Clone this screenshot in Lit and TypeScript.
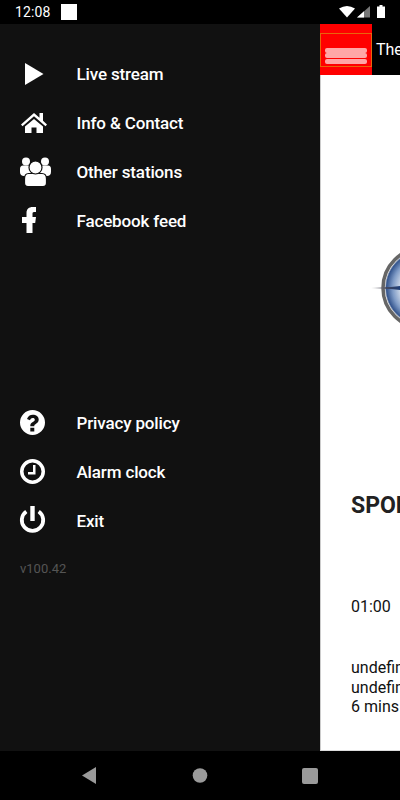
import { LitElement, html, css, svg } from "lit";
import { customElement } from "lit/decorators.js";

const topItems = [
  { label: "Live stream", icon: svg`<svg class="ic" width="40" height="30" viewBox="0 0 40 30"><path d="M12 4 L30.500 15 L12 26 Z"/></svg>` },
  { label: "Info & Contact", icon: svg`<svg class="ic" width="40" height="30" viewBox="0 0 40 30"><path d="M8 16.500 L21 5 L26.500 9.700 V5 H30 V12.800 L34 16.500 L32.500 18.200 L21 8.200 L9.500 18.200 Z"/><path d="M12 18.500 L21 11 L30 18.500 V25 H23.500 V19.500 H18.500 V25 H12 Z"/></svg>` },
  { label: "Other stations", icon: svg`<svg class="ic" width="40" height="30" viewBox="0 0 40 30"><circle cx="13" cy="4.500" r="4"/><circle cx="32" cy="4.500" r="4"/><path d="M10 8.500 H35 C37 8.500 38 10 38 12 V15 C38 17.500 36.500 19 34 19 H11 C8.500 19 7 17.500 7 15 V12 C7 10 8 8.500 10 8.500 Z"/><path d="M15.500 16.500 H29 C32 16.500 33.500 19 33.500 22 V26 C33.500 28 32 29.500 30 29.500 H15 C13 29.500 11.500 28 11.500 26 V22 C11.500 19 13 16.500 15.500 16.500 Z" stroke="#111" stroke-width="1.200"/><circle cx="22.500" cy="10.500" r="6.500" stroke="#111" stroke-width="1.200"/></svg>` },
  { label: "Facebook feed", icon: svg`<svg class="ic" width="40" height="30" viewBox="0 0 40 30"><path d="M13.500 27 V17 H9 V11 H13.500 V7 C13.500 3 16 1 19.500 1 H23 V6 H21 C19.800 6 19.500 6.800 19.500 8 V11 H23 L22.200 17 H19.500 V27 Z"/></svg>` },
];

const bottomItems = [
  { label: "Privacy policy", icon: svg`<svg class="ic" width="40" height="30" viewBox="0 0 40 30"><path fill-rule="evenodd" d="M19.500 2 A12.500 12.500 0 1 1 19.500 27 A12.500 12.500 0 1 1 19.500 2 Z M14 11 L17 12.300 C17.500 10.800 18.500 10.100 19.700 10.100 C21 10.100 21.800 10.800 21.800 11.700 C21.800 12.700 21 13.200 19.800 13.900 C18.200 14.800 17.300 15.800 17.300 17.500 V18.300 H21.300 V17.800 C21.300 17 21.800 16.600 22.800 16 C24.500 15 25.700 13.800 25.700 11.600 C25.700 8.600 23.100 6.800 19.800 6.800 C17 6.800 15 8.300 14 11 Z M17.300 19.800 V23.500 H21.300 V19.800 Z"/></svg>` },
  { label: "Alarm clock", icon: svg`<svg class="ic" width="40" height="30" viewBox="0 0 40 30"><path fill-rule="evenodd" d="M19.500 2 A12.500 12.500 0 1 1 19.500 27 A12.500 12.500 0 1 1 19.500 2 Z M19.500 5.500 A9 9 0 1 0 19.500 23.500 A9 9 0 1 0 19.500 5.500 Z"/><path d="M20 8 H22.500 V17.500 H15 V15 H20 Z"/></svg>` },
  { label: "Exit", icon: svg`<svg class="ic" width="40" height="30" viewBox="0 0 40 30"><path d="M17.300 0 H21.700 V15 H17.300 Z"/><path fill="none" stroke="#fff" stroke-width="3.800" d="M13.300 5.500 A10.700 10.700 0 1 0 25.700 5.500"/></svg>` },
];

@customElement("app-root")
export class AppRoot extends LitElement {
  static styles = css`
    :host { display: block; width: 400px; height: 800px; overflow: hidden; background: #000; font-family: Roboto, "Noto Sans", sans-serif; }
    .status { height: 24px; background: #000; display: flex; align-items: center; padding: 0 14px 0 15px; color: #fff; }
    .time { font-size: 14px; line-height: 24px; letter-spacing: 0.1px; }
    .square { width: 16px; height: 16px; background: #fff; margin-left: 11px; }
    .sys { margin-left: auto; display: flex; align-items: center; }
    .main { display: flex; height: 727px; }
    .drawer { width: 320px; background: #111; flex: none; display: flex; flex-direction: column; padding-top: 25px; }
    .list { display: flex; flex-direction: column; }
    .list.bottom { margin-top: 153px; }
    .item { height: 49px; display: flex; align-items: center; color: #fff; }
    .ic { flex: none; margin-left: 13px; fill: #fff; }
    .label { margin-left: 23.500px; font-weight: 500; font-size: 17px; letter-spacing: -0.150px; }
    .version { margin: 16px 0 0 20px; font-size: 13px; color: #555; }
    .content { flex: 1; min-width: 0; overflow: hidden; display: flex; flex-direction: column; background: #fff; }
    .bar { height: 51px; background: #000; display: flex; align-items: center; flex: none; }
    .menu-wrap { width: 52px; height: 51px; background: #f00; display: flex; align-items: center; flex: none; }
    .menu { width: 52px; height: 34px; box-sizing: border-box; border: 1px solid #e8650c; display: flex; align-items: center; justify-content: center; }
    .burger { width: 42px; height: 16px; margin-top: 12px; display: flex; flex-direction: column; gap: 0.500px; }
    .burger i { display: block; height: 5px; background: #ffa6a6; border-radius: 2px; }
    .title { color: #fff; font-size: 16px; margin-left: 4px; white-space: nowrap; }
    .body { flex: 1; min-height: 0; border-left: 1px solid #ccc; border-bottom: 1px solid #ddd; padding-left: 30px; color: #111; display: flex; flex-direction: column; align-items: flex-start; }
    .logo { flex: none; margin: 168px 0 0 20px; }
    .h { flex: none; margin-top: 160px; font-size: 23px; line-height: 26px; font-weight: 700; white-space: nowrap; color: #222; }
    .clock { flex: none; margin-top: 78px; font-size: 16px; line-height: 19px; white-space: nowrap; }
    .desc { flex: none; margin-top: 42px; font-size: 16px; line-height: 19.500px; white-space: nowrap; }
    .nav { height: 49px; background: #000; display: flex; }
  `;

  render() {
    return html`
      <div class="status">
        <span class="time">12:08</span>
        <span class="square"></span>
        <span class="sys">
          <svg width="52" height="16" viewBox="0 0 52 16">
            <path d="M5 4.500 Q13 -0.500 21 4.500 L13 13.500 Z" fill="#fff"/>
            <path d="M23 13.500 L36 2 V13.500 Z" fill="#777"/>
            <path d="M23 13.500 L30 7.300 V13.500 Z" fill="#fff"/>
            <path d="M43 2.500 H45.500 V1 H48.500 V2.500 H51 V14 H43 Z" fill="#fff"/>
          </svg>
        </span>
      </div>
      <div class="main">
        <div class="drawer">
          <div class="list">
            ${topItems.map((i) => html`<div class="item">${i.icon}<span class="label">${i.label}</span></div>`)}
          </div>
          <div class="list bottom">
            ${bottomItems.map((i) => html`<div class="item">${i.icon}<span class="label">${i.label}</span></div>`)}
          </div>
          <div class="version">v100.42</div>
        </div>
        <div class="content">
          <div class="bar">
            <div class="menu-wrap"><div class="menu"><div class="burger"><i></i><i></i><i></i></div></div></div>
            <span class="title">The</span>
          </div>
          <div class="body">
            <svg class="logo" width="60" height="90" viewBox="0 0 60 90">
              <defs>
                <radialGradient id="g" cx="52" cy="45" r="38" gradientUnits="userSpaceOnUse">
                  <stop offset="0" stop-color="#fff"/>
                  <stop offset="0.55" stop-color="#dfe6f0"/>
                  <stop offset="0.8" stop-color="#7f9bc6"/>
                  <stop offset="0.96" stop-color="#34558e"/>
                  <stop offset="1" stop-color="#c8ccd4"/>
                </radialGradient>
                <linearGradient id="f" x1="0" x2="1" y1="0" y2="0">
                  <stop offset="0" stop-color="#ccc"/>
                  <stop offset="0.5" stop-color="#445"/>
                  <stop offset="1" stop-color="#1c3f7c"/>
                </linearGradient>
              </defs>
              <circle cx="52" cy="45" r="38" fill="url(#g)"/>
              <circle cx="52" cy="45" r="40" fill="none" stroke="#666" stroke-width="3.500"/>
              <path d="M0 45 L20 44 L30 43 V47 L20 46 Z" fill="url(#f)"/>
            </svg>
            <div class="h">SPORT</div>
            <div class="clock">01:00</div>
            <div class="desc">undefined<br />undefined<br />6 mins</div>
          </div>
        </div>
      </div>
      <div class="nav">
        <svg width="400" height="49" viewBox="0 0 400 49">
          <path d="M82 24.500 L96 16 V33 Z" fill="#9a9a9a"/>
          <circle cx="200" cy="24.500" r="7.300" fill="#9a9a9a"/>
          <rect x="302" y="17" width="16" height="16" rx="2" fill="#9a9a9a"/>
        </svg>
      </div>
    `;
  }
}
